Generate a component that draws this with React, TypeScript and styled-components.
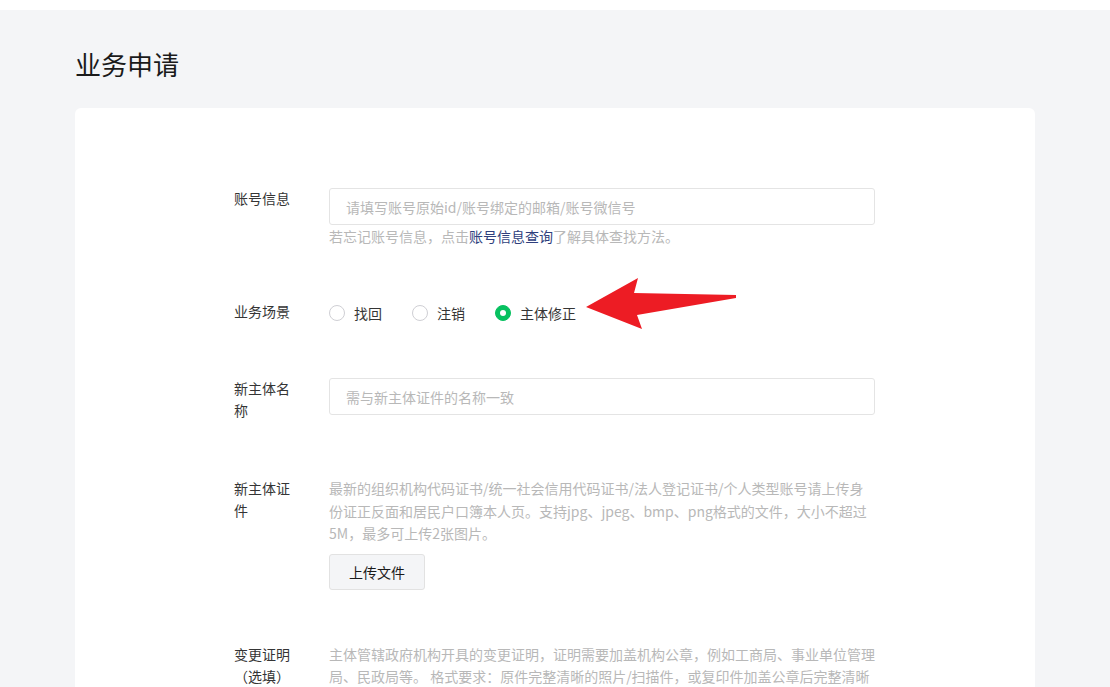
import React from "react";
import styled, { createGlobalStyle } from "styled-components";

const GlobalStyle = createGlobalStyle`
  html, body {
    margin: 0;
    padding: 0;
    background: #f4f5f7;
    overflow: hidden;
  }
  body {
    font-family: "Noto Sans CJK SC", "Noto Sans", sans-serif;
    color: #353535;
    font-size: 14px;
  }
`;

const TopBar = styled.div`
  height: 10px;
  background: #ffffff;
`;

const Main = styled.div`
  width: 960px;
  margin: 0 auto;
`;

const PageTitle = styled.h2`
  margin: 0;
  padding: 36px 0 27px;
  font-size: 26px;
  font-weight: 400;
  line-height: 35px;
  color: #1a1a1a;
`;

const Card = styled.div`
  background: #ffffff;
  border-radius: 6px;
  padding: 80px 0 60px 159px;
  min-height: 700px;
`;

const Form = styled.div`
  width: 641px;
`;

const Row = styled.div<{ $space?: number }>`
  display: flex;
  margin-bottom: ${(p) => p.$space ?? 54}px;
`;

const Label = styled.div`
  width: 60px;
  margin-right: 35px;
  flex-shrink: 0;
  line-height: 22px;
  margin-top: -1px;
  color: #353535;
`;

const Field = styled.div`
  width: 546px;
`;

const Input = styled.input`
  display: block;
  box-sizing: border-box;
  width: 100%;
  height: 37px;
  border: 1px solid #e4e4e4;
  border-radius: 3px;
  padding: 0 16px;
  font-family: inherit;
  font-size: 14px;
  color: #353535;
  outline: none;
  &::placeholder {
    color: #b8b8b8;
  }
`;

const Help = styled.div`
  color: #b8b8b8;
  line-height: 22px;
  font-size: 14px;
`;

const Link = styled.a`
  color: #2f3f7d;
  text-decoration: none;
`;

const RadioGroup = styled.div`
  display: flex;
  align-items: center;
  height: 22px;
  padding-top: 1px;
`;

const RadioItem = styled.label`
  display: flex;
  align-items: center;
  margin-right: 30px;
  cursor: pointer;
`;

const RadioDot = styled.span<{ $checked?: boolean }>`
  box-sizing: border-box;
  width: 16px;
  height: 16px;
  border-radius: 50%;
  margin-right: 9px;
  border: 1px solid ${(p) => (p.$checked ? "#07c160" : "#cfcfd4")};
  background: ${(p) => (p.$checked ? "#07c160" : "#fff")};
  display: flex;
  align-items: center;
  justify-content: center;
  &::after {
    content: "";
    width: 6px;
    height: 6px;
    border-radius: 50%;
    background: #fff;
    display: ${(p) => (p.$checked ? "block" : "none")};
  }
`;

const RadioText = styled.span`
  line-height: 22px;
  color: #353535;
`;

const Desc = styled.div`
  color: #b8b8b8;
  line-height: 22.5px;
  margin-top: -1px;
`;

const UploadButton = styled.button`
  display: block;
  margin-top: 9px;
  width: 96px;
  height: 36px;
  border: 1px solid #e2e2e2;
  border-radius: 3px;
  background: #f4f5f7;
  font-family: inherit;
  font-size: 14px;
  color: #1a1a1a;
  cursor: pointer;
`;

const ArrowWrap = styled.div`
  position: relative;
`;

const Arrow = styled.svg`
  position: absolute;
  left: 256px;
  top: -24px;
`;

const scenes = [
  { key: "recover", text: "找回" },
  { key: "cancel", text: "注销" },
  { key: "fix", text: "主体修正", checked: true },
];

const App: React.FC = () => (
  <>
    <GlobalStyle />
    <TopBar />
    <Main>
      <PageTitle>业务申请</PageTitle>
      <Card>
        <Form>
          <Row>
            <Label>账号信息</Label>
            <Field>
              <Input placeholder="请填写账号原始id/账号绑定的邮箱/账号微信号" />
              <Help>
                若忘记账号信息，点击<Link href="#">账号信息查询</Link>了解具体查找方法。
              </Help>
            </Field>
          </Row>
          <Row>
            <Label>业务场景</Label>
            <Field>
              <ArrowWrap>
                <RadioGroup>
                  {scenes.map((s) => (
                    <RadioItem key={s.key}>
                      <RadioDot $checked={s.checked} />
                      <RadioText>{s.text}</RadioText>
                    </RadioItem>
                  ))}
                </RadioGroup>
                <Arrow width="152" height="54" viewBox="0 0 152 54">
                  <polygon
                    points="1,30 53,1 49,16 151,18 151,21 52,38 57,52"
                    fill="#ed1c24"
                  />
                </Arrow>
              </ArrowWrap>
            </Field>
          </Row>
          <Row $space={57}>
            <Label>新主体名称</Label>
            <Field>
              <Input placeholder="需与新主体证件的名称一致" />
            </Field>
          </Row>
          <Row>
            <Label>新主体证件</Label>
            <Field>
              <Desc>
                最新的组织机构代码证书/统一社会信用代码证书/法人登记证书/个人类型账号请上传身份证正反面和居民户口簿本人页。支持jpg、jpeg、bmp、png格式的文件，大小不超过5M，最多可上传2张图片。
              </Desc>
              <UploadButton>上传文件</UploadButton>
            </Field>
          </Row>
          <Row>
            <Label>
              变更证明
              <br />
              （选填）
            </Label>
            <Field>
              <Desc>
                主体管辖政府机构开具的变更证明，证明需要加盖机构公章，例如工商局、事业单位管理局、民政局等。 格式要求：原件完整清晰的照片/扫描件，或复印件加盖公章后完整清晰的照片/扫描件。支持jpg、jpeg、bmp、png格式的文件，大小不超过5M。
              </Desc>
              <UploadButton>上传文件</UploadButton>
            </Field>
          </Row>
        </Form>
      </Card>
    </Main>
  </>
);

export default App;
